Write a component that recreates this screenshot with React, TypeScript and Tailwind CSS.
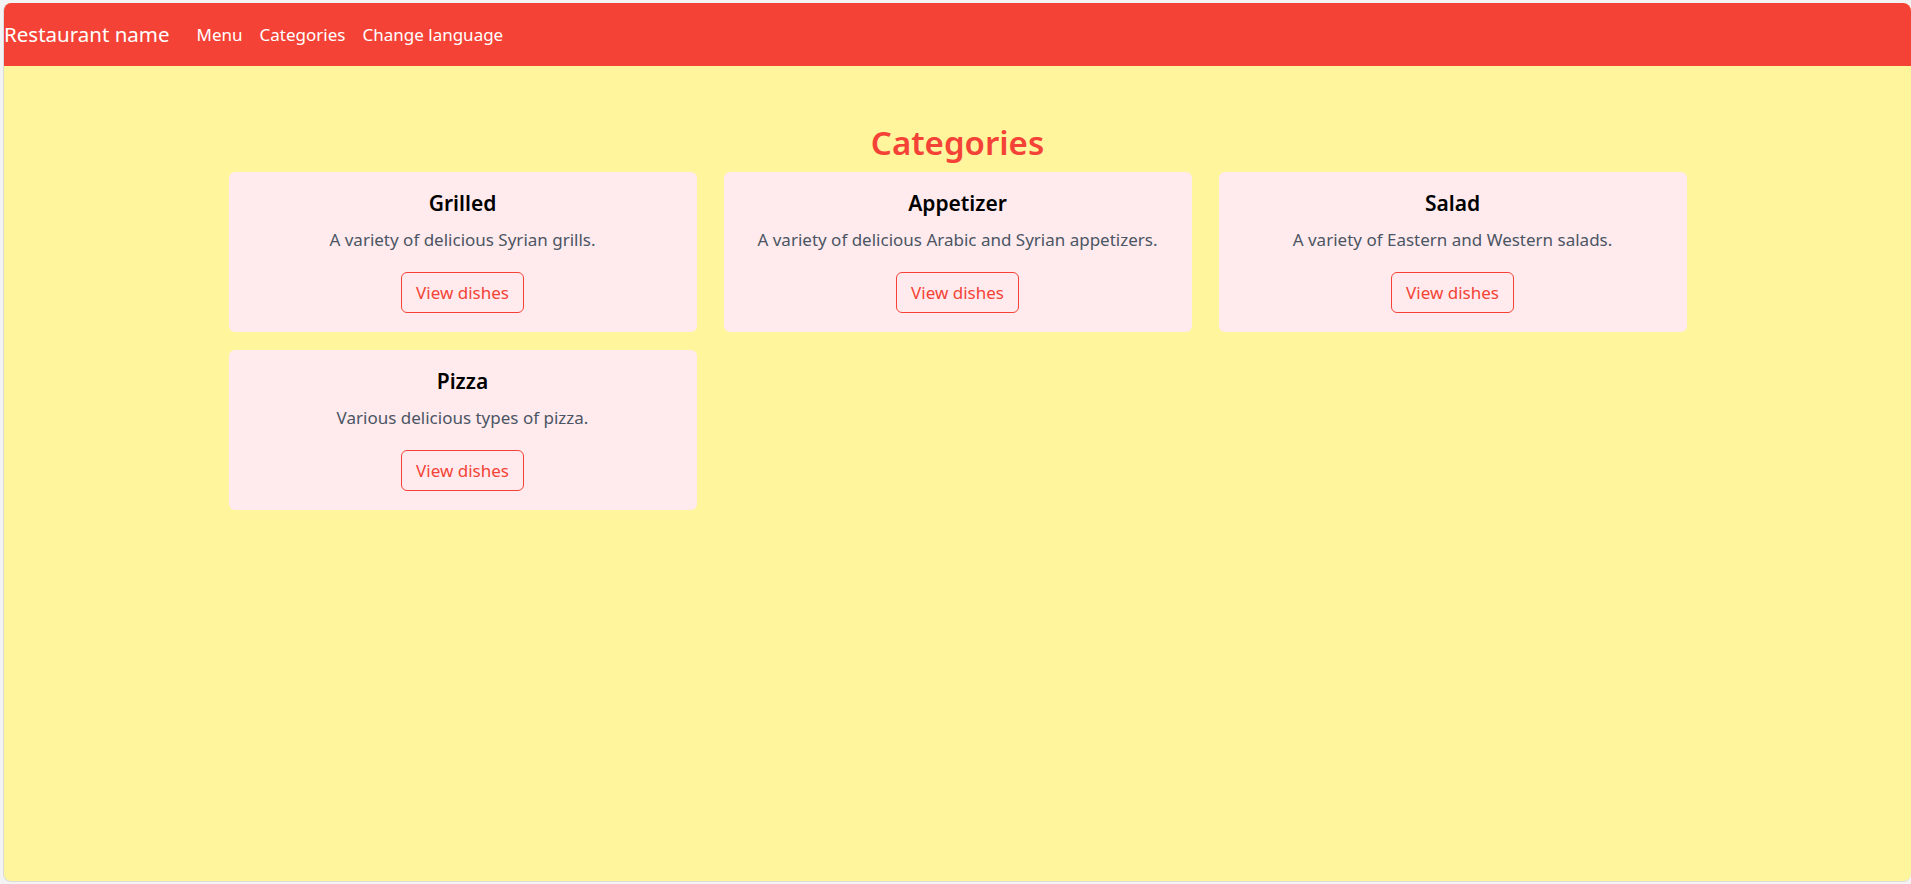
const categories = [
  { name: "Grilled", description: "A variety of delicious Syrian grills." },
  { name: "Appetizer", description: "A variety of delicious Arabic and Syrian appetizers." },
  { name: "Salad", description: "A variety of Eastern and Western salads." },
  { name: "Pizza", description: "Various delicious types of pizza." },
];

export default function App() {
  return (
    <div
      className="h-screen w-full bg-[#f3f3f3] pl-[3px] pt-[3px] pb-[2px]"
      style={{ fontFamily: '"Segoe UI", "Noto Sans", sans-serif' }}
    >
      <div className="flex h-full flex-col overflow-hidden rounded-lg border-l border-b border-[#dcdcdc] bg-[#fff59d]">
        <nav className="flex h-[63px] shrink-0 items-center bg-[#f44336] text-white">
          <a className="mr-[27px] text-[20.5px]" href="#">
            Restaurant name
          </a>
          <div className="flex items-center gap-[17px] text-[17px]">
            <a href="#">Menu</a>
            <a href="#">Categories</a>
            <a href="#">Change language</a>
          </div>
        </nav>

        <main className="pt-[56px]">
          <h1 className="mb-[8px] text-center text-[33px] font-semibold leading-[42px] text-[#f44336]">
            Categories
          </h1>
          <div className="mx-auto grid w-[1458px] grid-cols-3 gap-x-[27px] gap-y-[18px]">
            {categories.map((c) => (
              <div
                key={c.name}
                className="flex flex-col items-center rounded-md bg-[#ffebee] px-4 pt-[17px] pb-[19px] text-center"
              >
                <h2 className="text-[21px] font-semibold leading-7 text-black">{c.name}</h2>
                <p className="mt-[11px] text-[17px] leading-6 text-[#4b5563]">{c.description}</p>
                <button className="mt-5 h-[41px] rounded-md border border-[#f44336] px-[14px] text-[17px] text-[#f44336]">
                  View dishes
                </button>
              </div>
            ))}
          </div>
        </main>
      </div>
    </div>
  );
}
